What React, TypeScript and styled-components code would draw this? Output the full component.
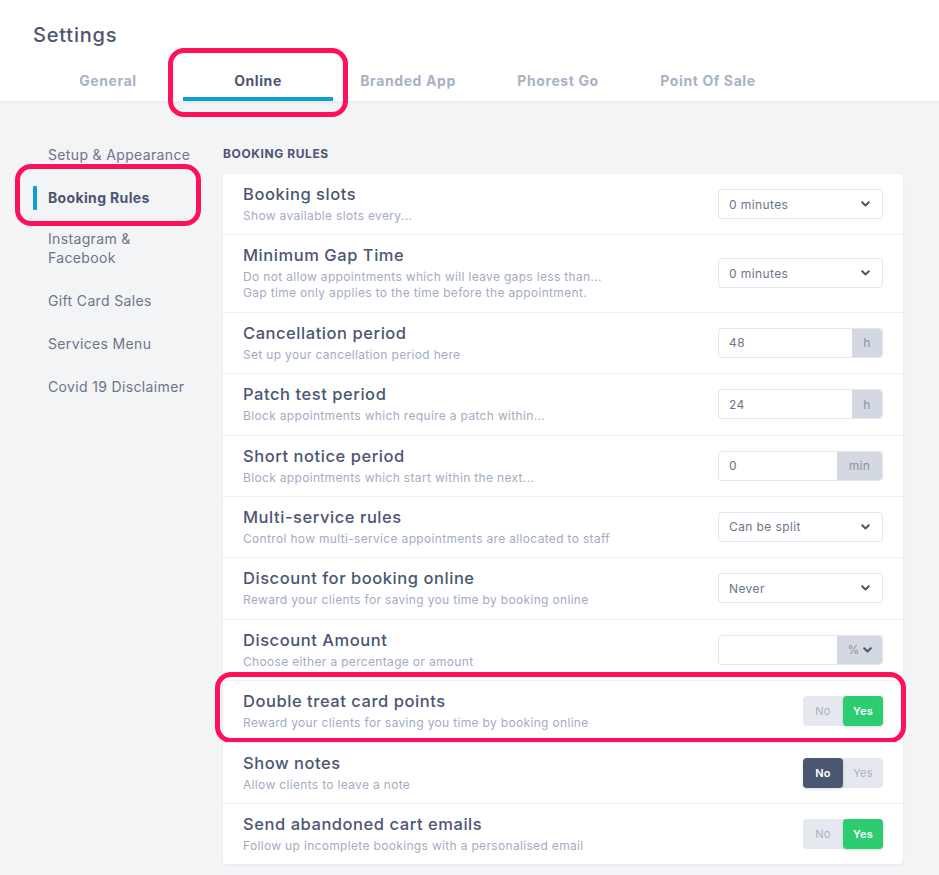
import React from "react";
import styled, { createGlobalStyle } from "styled-components";

const Global = createGlobalStyle`
  * { box-sizing: border-box; }
  html, body { margin: 0; padding: 0; background: #f3f4f6; }
  body { font-family: "Inter", "Open Sans", sans-serif; color: #4b5671; }
`;

const Page = styled.div`
  min-height: 875px;
  background: #f3f4f6;
`;

const Header = styled.header`
  background: #fff;
  padding: 0 33px;
  box-shadow: 0 1px 4px rgba(30, 40, 60, 0.06);
`;

const Title = styled.h1`
  margin: 0;
  padding-top: 22px;
  font-size: 20px;
  line-height: 26px;
  font-weight: 500;
  letter-spacing: 0.8px;
  color: #4b5671;
`;

const Tabs = styled.nav`
  display: flex;
  margin-top: 12px;
`;

const Tab = styled.div<{ $active?: boolean }>`
  position: relative;
  width: 150px;
  height: 41px;
  display: flex;
  justify-content: center;
  padding-top: 12px;
  font-size: 14px;
  font-weight: 700;
  letter-spacing: 0.6px;
  color: ${(p) => (p.$active ? "#4b5671" : "#a8b2c5")};
  border-bottom: 4px solid ${(p) => (p.$active ? "#0a9fd6" : "transparent")};
`;

const Annotation = styled.span<{ $t: number; $r: number; $b: number; $l: number }>`
  position: absolute;
  top: ${(p) => p.$t}px;
  right: ${(p) => p.$r}px;
  bottom: ${(p) => p.$b}px;
  left: ${(p) => p.$l}px;
  border: 5px solid #fe1159;
  border-radius: 16px;
  pointer-events: none;
`;

const Body = styled.div`
  display: flex;
  padding: 44px 36px 12px 33px;
`;

const Sidebar = styled.aside`
  width: 190px;
  flex-shrink: 0;
  display: flex;
  flex-direction: column;
`;

const SideItem = styled.div<{ $active?: boolean }>`
  position: relative;
  padding: 0 0 0 15px;
  font-size: 14px;
  line-height: 19px;
  letter-spacing: 0.35px;
  font-weight: ${(p) => (p.$active ? 700 : 400)};
  color: ${(p) => (p.$active ? "#4b5671" : "#6c7589")};
  margin-bottom: ${(p) => (p.$active ? 22 : 24)}px;
  width: 160px;
  &::before {
    content: "";
    display: ${(p) => (p.$active ? "block" : "none")};
    position: absolute;
    left: 0;
    top: -2px;
    width: 4px;
    height: 24px;
    background: #0a9fd6;
    border-radius: 1px;
  }
`;

const Main = styled.main`
  flex: 1;
`;

const SectionLabel = styled.div`
  font-size: 12px;
  font-weight: 700;
  line-height: 16px;
  letter-spacing: 0.6px;
  color: #4b5671;
  margin-top: 1px;
  margin-bottom: 12px;
`;

const Card = styled.div`
  background: #fff;
  border-radius: 4px;
  box-shadow: 0 1px 3px rgba(30, 40, 60, 0.06);
`;

const Row = styled.div`
  position: relative;
  display: flex;
  align-items: center;
  justify-content: space-between;
  padding: 10px 20px 10.4px 20px;
  border-top: 1px solid #eef0f3;
  &:first-child { border-top: none; }
`;

const RowText = styled.div`
  display: flex;
  flex-direction: column;
`;

const RowTitle = styled.div`
  font-size: 16.5px;
  line-height: 20px;
  font-weight: 500;
  letter-spacing: 0.55px;
  color: #4b5671;
`;

const RowDesc = styled.div`
  margin-top: 4px;
  font-size: 12px;
  line-height: 16px;
  letter-spacing: 0.33px;
  color: #a3acbf;
`;

const Select = styled.div`
  width: 165px;
  height: 30px;
  border: 1px solid #e3e6ee;
  border-radius: 4px;
  display: flex;
  align-items: center;
  justify-content: space-between;
  padding: 0 12px 0 10px;
  font-size: 12px;
  letter-spacing: 0.4px;
  color: #6c7589;
`;

const InputGroup = styled.div`
  width: 165px;
  height: 30px;
  border: 1px solid #e3e6ee;
  border-radius: 4px;
  display: flex;
  overflow: hidden;
`;

const InputValue = styled.div`
  flex: 1;
  display: flex;
  align-items: center;
  padding-left: 10px;
  font-size: 12px;
  letter-spacing: 0.4px;
  color: #6c7589;
`;

const Addon = styled.div<{ $w: number }>`
  width: ${(p) => p.$w}px;
  background: #d3d8e1;
  display: flex;
  align-items: center;
  justify-content: center;
  gap: 3px;
  font-size: 12px;
  letter-spacing: 0.3px;
  color: #8a93a6;
`;

const Toggle = styled.div`
  display: flex;
  width: 80px;
  height: 30px;
  border-radius: 4px;
  background: #e5e8ee;
`;

const ToggleOpt = styled.div<{ $on?: "green" | "dark" }>`
  flex: 1;
  display: flex;
  align-items: center;
  justify-content: center;
  border-radius: 4px;
  font-size: 11px;
  letter-spacing: 0.2px;
  font-weight: ${(p) => (p.$on ? 600 : 400)};
  color: ${(p) => (p.$on ? "#fff" : "#a8b2c5")};
  background: ${(p) =>
    p.$on === "green" ? "#2ecc71" : p.$on === "dark" ? "#4b5671" : "transparent"};
  box-shadow: ${(p) => (p.$on ? "0 1px 3px rgba(0,0,0,0.15)" : "none")};
`;

const Chevron = ({ color = "#4b5671" }: { color?: string }) => (
  <svg width="9" height="6" viewBox="0 0 9 6">
    <path d="M1.2 1.2 L4.5 4.5 L7.8 1.2" fill="none" stroke={color} strokeWidth="2" strokeLinecap="round" strokeLinejoin="round" />
  </svg>
);

type Control =
  | { kind: "select"; value: string }
  | { kind: "input"; value: string; addon: string; w: number; chevron?: boolean }
  | { kind: "toggle"; yes: boolean };

type Rule = { title: string; desc: string[]; control: Control; mark?: boolean };

const rules: Rule[] = [
  { title: "Booking slots", desc: ["Show available slots every..."], control: { kind: "select", value: "0 minutes" } },
  {
    title: "Minimum Gap Time",
    desc: ["Do not allow appointments which will leave gaps less than...", "Gap time only applies to the time before the appointment."],
    control: { kind: "select", value: "0 minutes" },
  },
  { title: "Cancellation period", desc: ["Set up your cancellation period here"], control: { kind: "input", value: "48", addon: "h", w: 30 } },
  { title: "Patch test period", desc: ["Block appointments which require a patch within..."], control: { kind: "input", value: "24", addon: "h", w: 30 } },
  { title: "Short notice period", desc: ["Block appointments which start within the next..."], control: { kind: "input", value: "0", addon: "min", w: 45 } },
  { title: "Multi-service rules", desc: ["Control how multi-service appointments are allocated to staff"], control: { kind: "select", value: "Can be split" } },
  { title: "Discount for booking online", desc: ["Reward your clients for saving you time by booking online"], control: { kind: "select", value: "Never" } },
  { title: "Discount Amount", desc: ["Choose either a percentage or amount"], control: { kind: "input", value: "", addon: "%", w: 45, chevron: true } },
  { title: "Double treat card points", desc: ["Reward your clients for saving you time by booking online"], control: { kind: "toggle", yes: true }, mark: true },
  { title: "Show notes", desc: ["Allow clients to leave a note"], control: { kind: "toggle", yes: false } },
  { title: "Send abandoned cart emails", desc: ["Follow up incomplete bookings with a personalised email"], control: { kind: "toggle", yes: true } },
];

const renderControl = (c: Control) => {
  if (c.kind === "select")
    return (
      <Select>
        <span>{c.value}</span>
        <Chevron />
      </Select>
    );
  if (c.kind === "input")
    return (
      <InputGroup>
        <InputValue>{c.value}</InputValue>
        <Addon $w={c.w}>
          {c.addon}
          {c.chevron && <Chevron />}
        </Addon>
      </InputGroup>
    );
  return (
    <Toggle>
      <ToggleOpt $on={c.yes ? undefined : "dark"}>No</ToggleOpt>
      <ToggleOpt $on={c.yes ? "green" : undefined}>Yes</ToggleOpt>
    </Toggle>
  );
};

const tabs = ["General", "Online", "Branded App", "Phorest Go", "Point Of Sale"];
const side = ["Setup & Appearance", "Booking Rules", "Instagram & Facebook", "Gift Card Sales", "Services Menu", "Covid 19 Disclaimer"];

export default function App() {
  return (
    <Page>
      <Global />
      <Header>
        <Title>Settings</Title>
        <Tabs>
          {tabs.map((t) => (
            <Tab key={t} $active={t === "Online"}>
              {t}
              {t === "Online" && <Annotation $t={-12} $r={-15} $b={-20} $l={-15} />}
            </Tab>
          ))}
        </Tabs>
      </Header>
      <Body>
        <Sidebar>
          {side.map((s) => (
            <SideItem key={s} $active={s === "Booking Rules"}>
              {s}
              {s === "Booking Rules" && <Annotation $t={-24} $r={-8} $b={-19} $l={-18} />}
            </SideItem>
          ))}
        </Sidebar>
        <Main>
          <SectionLabel>BOOKING RULES</SectionLabel>
          <Card>
            {rules.map((r) => (
              <Row key={r.title}>
                <RowText>
                  <RowTitle>{r.title}</RowTitle>
                  <RowDesc>
                    {r.desc.map((d) => (
                      <div key={d}>{d}</div>
                    ))}
                  </RowDesc>
                </RowText>
                {renderControl(r.control)}
                {r.mark && <Annotation $t={-9} $r={-3} $b={-1} $l={-8} />}
              </Row>
            ))}
          </Card>
        </Main>
      </Body>
    </Page>
  );
}
